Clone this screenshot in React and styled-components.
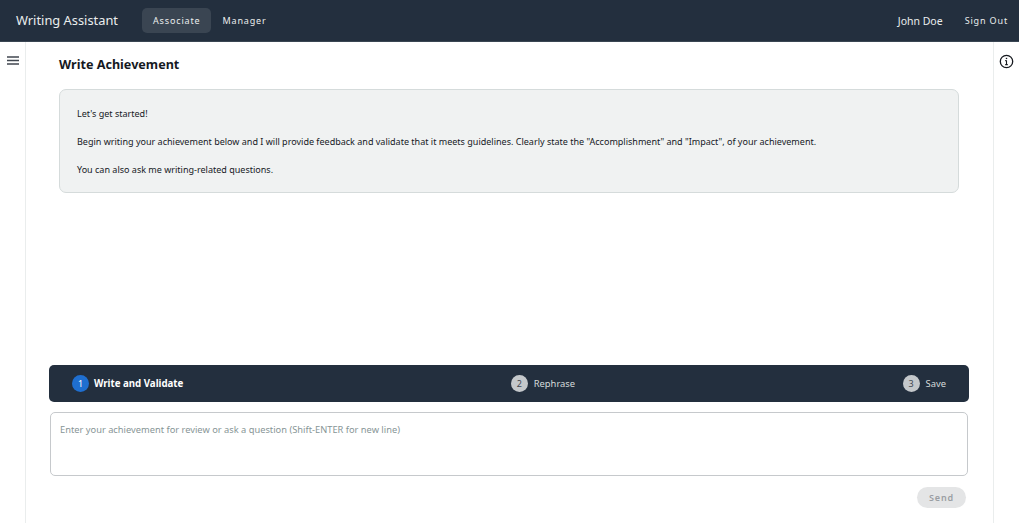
import React from "react";
import styled, { createGlobalStyle } from "styled-components";

const Global = createGlobalStyle`
  html, body { margin: 0; padding: 0; background: #fff; }
  body { font-family: "Noto Sans", "Open Sans", sans-serif; color: #16191f; overflow: hidden; }
  * { box-sizing: border-box; }
`;

const Page = styled.div`
  width: 1024px;
  height: 523px;
  display: flex;
  flex-direction: column;
`;

const Nav = styled.header`
  width: 1019px;
  height: 42px;
  flex: none;
  background: #232f3e;
  border-bottom: 1px solid #3a4653;
  display: flex;
  align-items: center;
  padding: 0 11px 0 16px;
  color: #f2f3f3;
`;

const Brand = styled.div`
  font-size: 12.85px;
  width: 126px;
  padding-bottom: 2px;
  color: #eaeded;
`;

const NavTab = styled.div`
  font-size: 9px;
  letter-spacing: 0.85px;
  height: 25px;
  display: flex;
  align-items: center;
  padding: 0 11px;
  border-radius: 5px;
  color: #eaeded;
  background: ${(p) => (p.$active ? "#3a4552" : "transparent")};
`;

const NavRight = styled.div`
  margin-left: auto;
  display: flex;
  align-items: center;
  gap: 22px;
`;

const UserName = styled.span`
  font-size: 10.5px;
  color: #eaeded;
`;

const SignOut = styled.span`
  font-size: 9px;
  letter-spacing: 0.85px;
  color: #eaeded;
`;

const Body = styled.div`
  flex: 1;
  display: flex;
  min-height: 0;
`;

const LeftRail = styled.aside`
  width: 26px;
  flex: none;
  border-right: 1px solid #eaeded;
  padding: 14px 0 0 7px;
  color: #414750;
`;

const RightRail = styled.aside`
  width: 31px;
  flex: none;
  border-left: 1px solid #eaeded;
  padding: 12px 0 0 5px;
  color: #16191f;
`;

const IconSvg = styled.svg`
  display: block;
`;

const Main = styled.main`
  flex: 1;
  min-width: 0;
  display: flex;
  flex-direction: column;
  padding: 0 24px 15px 23px;
`;

const Title = styled.h1`
  margin: 15px 0 0 10px;
  font-size: 12.6px;
  line-height: 16px;
  font-weight: 700;
  color: #16191f;
`;

const Message = styled.section`
  margin: 16px 10px 0 10px;
  height: 104px;
  background: #f0f2f2;
  border: 1px solid #d5dbdb;
  border-radius: 7px;
  padding: 17px;
  display: flex;
  flex-direction: column;
  gap: 14px;
`;

const Line = styled.p`
  margin: 0;
  font-size: 9.03px;
  line-height: 14px;
  color: #16191f;
`;

const Steps = styled.nav`
  margin-top: auto;
  height: 37px;
  flex: none;
  background: #232f3e;
  border-radius: 5px;
  display: flex;
  align-items: center;
  justify-content: space-between;
  padding: 0 23px;
`;

const Step = styled.div`
  display: flex;
  align-items: center;
  gap: ${(p) => (p.$active ? "5px" : "6px")};
  font-size: ${(p) => (p.$active ? "9.7px" : "9.4px")};
  font-weight: ${(p) => (p.$active ? 700 : 400)};
  color: ${(p) => (p.$active ? "#fff" : "#d5dbdb")};
`;

const StepDot = styled.span`
  width: 17px;
  height: 17px;
  border-radius: 50%;
  display: flex;
  align-items: center;
  justify-content: center;
  font-size: 9px;
  font-weight: 400;
  background: ${(p) => (p.$active ? "#1f6fd0" : "#c4c8cb")};
  color: ${(p) => (p.$active ? "#fff" : "#414750")};
`;

const InputBox = styled.div`
  margin: 10px 1px 0 1px;
  height: 64px;
  flex: none;
  border: 1px solid #c6c9cc;
  border-radius: 5px;
  padding: 11px 9px;
  font-size: 9.3px;
  line-height: 12px;
  color: #879596;
`;

const Actions = styled.div`
  margin-top: 11px;
  display: flex;
  justify-content: flex-end;
  padding-right: 3px;
`;

const SendButton = styled.div`
  width: 49px;
  height: 21px;
  border-radius: 11px;
  background: #e4e5e6;
  color: #9a9ea3;
  font-size: 9px;
  font-weight: 600;
  letter-spacing: 0.9px;
  display: flex;
  align-items: center;
  justify-content: center;
`;

export default function App() {
  return (
    <Page>
      <Global />
      <Nav>
        <Brand>Writing Assistant</Brand>
        <NavTab $active>Associate</NavTab>
        <NavTab>Manager</NavTab>
        <NavRight>
          <UserName>John Doe</UserName>
          <SignOut>Sign Out</SignOut>
        </NavRight>
      </Nav>
      <Body>
        <LeftRail>
          <IconSvg width="12" height="10" viewBox="0 0 12 10" fill="none" stroke="currentColor" strokeWidth="1.4">
            <path d="M0 1h12M0 4.5h12M0 8h12" />
          </IconSvg>
        </LeftRail>
        <Main>
          <Title>Write Achievement</Title>
          <Message>
            <Line>Let's get started!</Line>
            <Line>Begin writing your achievement below and I will provide feedback and validate that it meets guidelines. Clearly state the "Accomplishment" and "Impact", of your achievement.</Line>
            <Line>You can also ask me writing-related questions.</Line>
          </Message>
          <Steps>
            <Step $active><StepDot $active>1</StepDot>Write and Validate</Step>
            <Step><StepDot>2</StepDot>Rephrase</Step>
            <Step><StepDot>3</StepDot>Save</Step>
          </Steps>
          <InputBox>Enter your achievement for review or ask a question (Shift-ENTER for new line)</InputBox>
          <Actions><SendButton>Send</SendButton></Actions>
        </Main>
        <RightRail>
          <IconSvg width="15" height="15" viewBox="0 0 15 15" fill="none" stroke="currentColor" strokeWidth="1.3">
            <circle cx="7.5" cy="7.5" r="6.2" />
            <path d="M7.5 6.6v4M6.2 10.6h2.6M6.2 6.6h1.3" strokeWidth="1.1" />
            <path d="M7.5 3.8v1.3" strokeWidth="1.4" />
          </IconSvg>
        </RightRail>
      </Body>
    </Page>
  );
}
